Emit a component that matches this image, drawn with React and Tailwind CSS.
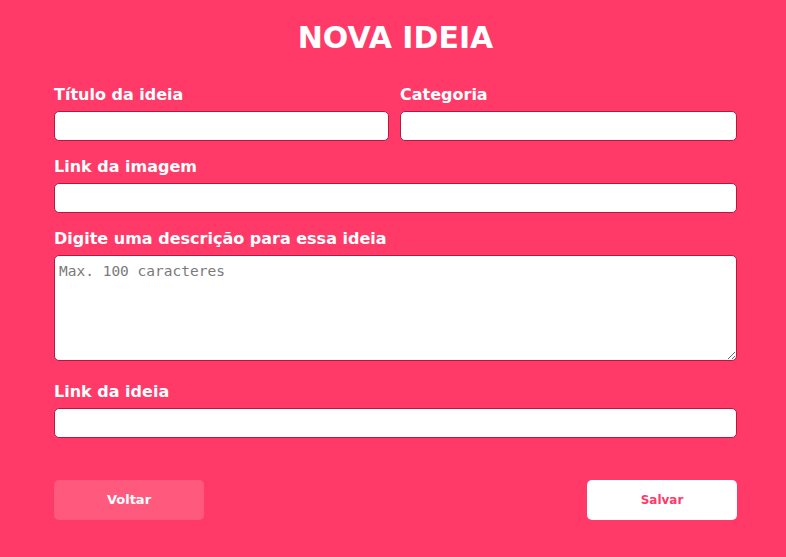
import React, { useState } from "react";

function Field({ label, children, className = "" }) {
  return (
    <div className={"flex flex-col " + className}>
      <label className="pt-[2px] mb-[6px] text-[16px] leading-[20px] font-bold text-white">{label}</label>
      {children}
    </div>
  );
}

const inputClass =
  "block w-full h-[30px] bg-white rounded-[5px] border border-[#b8173f] px-[5px] text-[14px] text-black focus:outline-none";

export default function App() {
  const [form, setForm] = useState({ titulo: "", categoria: "", imagem: "", descricao: "", link: "" });

  const update = (key) => (e) => setForm((prev) => ({ ...prev, [key]: e.target.value }));

  return (
    <div
      className="min-h-screen w-full bg-[#ff3a68] pt-[20px]"
      style={{ fontFamily: '"DejaVu Sans", "Liberation Sans", sans-serif' }}
    >
      <div className="ml-[54px] w-[683px]">
        {/* Title */}
        <h1 className="text-center text-[30px] leading-[36px] font-bold text-white">NOVA IDEIA</h1>

        <form onSubmit={(e) => e.preventDefault()} className="mt-[27px] flex flex-col">
          {/* Row 1 */}
          <div className="grid grid-cols-[335px_337px] gap-x-[11px]">
            <Field label="Título da ideia">
              <input type="text" value={form.titulo} onChange={update("titulo")} className={inputClass} />
            </Field>
            <Field label="Categoria">
              <input type="text" value={form.categoria} onChange={update("categoria")} className={inputClass} />
            </Field>
          </div>

          <Field label="Link da imagem" className="mt-[14px]">
            <input type="text" value={form.imagem} onChange={update("imagem")} className={inputClass} />
          </Field>

          <Field label="Digite uma descrição para essa ideia" className="mt-[14px]">
            <textarea
              value={form.descricao}
              onChange={update("descricao")}
              placeholder="Max. 100 caracteres"
              maxLength={100}
              className="block w-full h-[106px] bg-white rounded-[5px] border border-[#b8173f] px-[4px] py-[6px] text-[14.5px] leading-[18px] text-black placeholder:text-[#7a7a7a] focus:outline-none resize-y"
              style={{ fontFamily: '"DejaVu Sans Mono", "Liberation Mono", monospace' }}
            />
          </Field>

          <Field label="Link da ideia" className="mt-[19px]">
            <input type="text" value={form.link} onChange={update("link")} className={inputClass} />
          </Field>

          {/* Actions */}
          <div className="mt-[42px] flex justify-between">
            <button
              type="button"
              className="w-[150px] h-[40px] rounded-[5px] bg-[#ff5a7d] text-white text-[13px] font-bold"
            >
              Voltar
            </button>
            <button
              type="submit"
              className="w-[150px] h-[40px] rounded-[5px] bg-white text-[#ff3a68] text-[12px] font-bold"
            >
              Salvar
            </button>
          </div>
        </form>
      </div>
    </div>
  );
}
